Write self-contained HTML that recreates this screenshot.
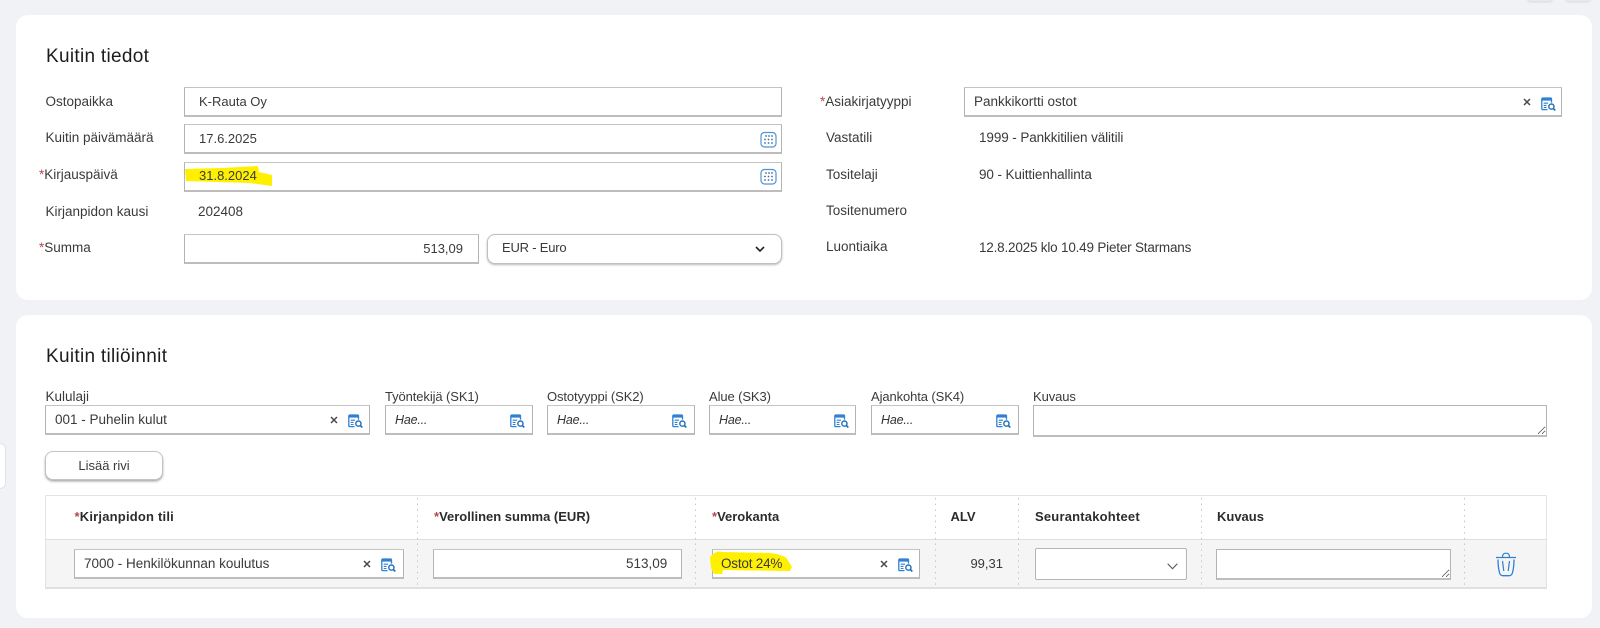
<!DOCTYPE html>
<html lang="fi">
<head>
<meta charset="utf-8">
<title>Kuitin tiedot</title>
<style>
html,body{margin:0;padding:0;background:#f0f2f6}
body{width:1600px;height:628px;position:relative;overflow:hidden;font-family:"Liberation Sans",sans-serif;font-size:13.5px;color:#3a3a3a;filter:blur(.3px)}
.a{position:absolute}
.card{position:absolute;background:#fff;border-radius:12px;left:16px;width:1576px}
.i{position:absolute;box-sizing:border-box;background:#fff;border:1px solid #b4b4b4;border-top-color:#c4c4c4;border-bottom:2px solid #bdbdbd}
.t{position:absolute;white-space:nowrap;line-height:20px;height:20px}
.h{font-size:19px;color:#1c1c1c;letter-spacing:.3px}
.b{font-weight:bold;color:#2c2c2c;font-size:13px}
.r{color:#b8454f}
.it{font-style:italic;color:#333;font-size:12.5px;letter-spacing:-.2px}
.s{font-size:13px}
.l{font-size:13px;letter-spacing:-.1px}
.dv{position:absolute;width:1px;background:linear-gradient(#c4c4c4 0 1.5px,transparent 1.5px) 0 0/1px 5.7px repeat-y}
textarea{position:absolute;box-sizing:border-box;margin:0;padding:0;background:#fff;border:1px solid #b4b4b4;border-bottom:2px solid #bdbdbd;border-radius:0;outline:none}
svg.o{position:absolute;overflow:visible}
</style>
</head>
<body>
<svg width="0" height="0" style="position:absolute">
<defs>
<symbol id="s" viewBox="0 0 15 14">
<path d="M10.5 5.6V2a1 1 0 0 0-1-1H1.8a1 1 0 0 0-1 1v9.6a1 1 0 0 0 1 1h4.7" fill="none" stroke="#2f80d2" stroke-width="1.3"/>
<path d="M1 1.2h9.4v2.4H1z" fill="#2f80d2"/>
<path d="M2.7 6.2h4.3M2.7 8.4h2.8M2.7 10.5h2.8" stroke="#2f80d2" stroke-width="1.1"/>
<circle cx="10.4" cy="9.6" r="2.6" fill="none" stroke="#1f6fc0" stroke-width="1.4"/>
<path d="M12.3 11.5l2 2" stroke="#1f6fc0" stroke-width="1.6"/>
</symbol>
<symbol id="x" viewBox="0 0 8 8">
<path d="M1 1l6 6M7 1L1 7" stroke="#4a4a4a" stroke-width="1.5"/>
</symbol>
<symbol id="c" viewBox="0 0 17 17">
<rect x="1" y="1.5" width="15" height="14.5" rx="3.5" fill="none" stroke="#4f93d8" stroke-width="1.2"/>
<g fill="#3f6f9f"><circle cx="6" cy="5" r=".9"/><circle cx="9" cy="5" r=".9"/><circle cx="12" cy="5" r=".9"/><circle cx="5" cy="8.5" r=".9"/><circle cx="8.5" cy="8.5" r=".9"/><circle cx="12" cy="8.5" r=".9"/><circle cx="5" cy="12" r=".9"/><circle cx="8.5" cy="12" r=".9"/><circle cx="12" cy="12" r=".9"/></g>
</symbol>
</defs>
</svg>

<div class="a" style="left:1527px;top:-7px;width:26px;height:8px;border-radius:4px;background:#e8ebee;box-shadow:0 1px 2px #d4dada"></div>
<div class="a" style="left:1565px;top:-7px;width:26px;height:8px;border-radius:4px;background:#e8ebee;box-shadow:0 1px 2px #d4dada"></div>
<div class="a" style="left:-10px;top:443px;width:14px;height:44px;background:#fff;border:1px solid #e2e3e6;border-radius:6px"></div>

<div class="card" style="top:15px;height:285px"></div>
<div class="card" style="top:315px;height:303px"></div>

<!-- Card 1 -->
<div class="t h" style="left:46px;top:46.5px">Kuitin tiedot</div>

<div class="t" style="left:45.5px;top:92px">Ostopaikka</div>
<div class="t" style="left:45.5px;top:128px">Kuitin päivämäärä</div>
<div class="t" style="left:39px;top:165px"><span class="r">*</span>Kirjauspäivä</div>
<div class="t" style="left:45.5px;top:202px">Kirjanpidon kausi</div>
<div class="t" style="left:39px;top:238px"><span class="r">*</span>Summa</div>

<div class="i" style="left:184px;top:87px;width:598px;height:30px"></div>
<div class="i" style="left:184px;top:124px;width:598px;height:30px"></div>
<div class="i" style="left:184px;top:162px;width:598px;height:30px"></div>
<div class="i" style="left:184px;top:234px;width:295px;height:30px"></div>
<div class="i" style="left:487px;top:234px;width:295px;height:30px;border:1px solid #c0c0c0;border-radius:8px;box-shadow:0 1px 2px #b8b8b8"></div>

<svg class="o" style="left:0;top:0" width="1600" height="628">
<path d="M185 169 L222 168 L258 166 L259 172 L272 175 L272 186 L250 183 L186 181 Z" fill="#fff000"/>
</svg>

<div class="t s" style="left:199px;top:92px">K-Rauta Oy</div>
<div class="t s" style="left:199px;top:129px">17.6.2025</div>
<div class="t s" style="left:199px;top:166px">31.8.2024</div>
<div class="t" style="left:198px;top:202px">202408</div>
<div class="t s" style="left:423px;top:239px;width:40px;text-align:right">513,09</div>
<div class="t s" style="left:502px;top:238px;letter-spacing:-.2px">EUR - Euro</div>
<svg class="o" style="left:755px;top:246px" width="10" height="7"><path d="M1 1l4 4 4-4" fill="none" stroke="#222" stroke-width="1.6"/></svg>
<svg class="o" style="left:760px;top:131px" width="17" height="17"><use href="#c"/></svg>
<svg class="o" style="left:760px;top:168px" width="17" height="17"><use href="#c"/></svg>

<div class="t" style="left:820px;top:92px"><span class="r">*</span>Asiakirjatyyppi</div>
<div class="t" style="left:826px;top:128px">Vastatili</div>
<div class="t" style="left:826px;top:165px">Tositelaji</div>
<div class="t" style="left:826px;top:201px">Tositenumero</div>
<div class="t" style="left:826px;top:237px">Luontiaika</div>

<div class="i" style="left:964px;top:87px;width:598px;height:30px"></div>
<div class="t" style="left:974px;top:92px">Pankkikortti ostot</div>
<svg class="o" style="left:1522.5px;top:98px" width="8" height="8"><use href="#x"/></svg>
<svg class="o" style="left:1541px;top:96.5px" width="15" height="14"><use href="#s"/></svg>
<div class="t" style="left:979px;top:128px;letter-spacing:-.1px">1999 - Pankkitilien välitili</div>
<div class="t" style="left:979px;top:165px;letter-spacing:-.1px">90 - Kuittienhallinta</div>
<div class="t" style="left:979px;top:238px;letter-spacing:-.2px">12.8.2025 klo 10.49 Pieter Starmans</div>

<!-- Card 2 -->
<div class="t h" style="left:46px;top:346.5px">Kuitin tiliöinnit</div>

<div class="t" style="left:45.5px;top:387px">Kululaji</div>
<div class="t l" style="left:385px;top:387px">Työntekijä (SK1)</div>
<div class="t l" style="left:547px;top:387px">Ostotyyppi (SK2)</div>
<div class="t l" style="left:709px;top:387px">Alue (SK3)</div>
<div class="t l" style="left:871px;top:387px">Ajankohta (SK4)</div>
<div class="t l" style="left:1033px;top:387px">Kuvaus</div>

<div class="i" style="left:45px;top:405px;width:325px;height:30px"></div>
<div class="i" style="left:385px;top:405px;width:148px;height:30px"></div>
<div class="i" style="left:547px;top:405px;width:148px;height:30px"></div>
<div class="i" style="left:709px;top:405px;width:147px;height:30px"></div>
<div class="i" style="left:871px;top:405px;width:148px;height:30px"></div>
<textarea style="left:1033px;top:405px;width:514px;height:32px"></textarea>

<div class="t" style="left:55px;top:410px">001 - Puhelin kulut</div>
<svg class="o" style="left:330px;top:416px" width="8" height="8"><use href="#x"/></svg>
<svg class="o" style="left:348px;top:413.5px" width="15" height="14"><use href="#s"/></svg>
<div class="t it" style="left:395px;top:410px">Hae...</div>
<svg class="o" style="left:510px;top:413.5px" width="15" height="14"><use href="#s"/></svg>
<div class="t it" style="left:557px;top:410px">Hae...</div>
<svg class="o" style="left:672px;top:413.5px" width="15" height="14"><use href="#s"/></svg>
<div class="t it" style="left:719px;top:410px">Hae...</div>
<svg class="o" style="left:834px;top:413.5px" width="15" height="14"><use href="#s"/></svg>
<div class="t it" style="left:881px;top:410px">Hae...</div>
<svg class="o" style="left:996px;top:413.5px" width="15" height="14"><use href="#s"/></svg>

<div class="a" style="left:45px;top:451px;width:118px;height:29px;box-sizing:border-box;background:#fff;border:1px solid #c4c4c4;border-radius:8px;box-shadow:0 1.5px 2px #aaa;text-align:center;line-height:27px;font-size:13px">Lisää rivi</div>

<div class="a" style="left:45px;top:495px;width:1502px;height:94px;box-sizing:border-box;border:1px solid #e3e3e3;border-bottom:2px solid #e0e0e0;background:#fff"></div>
<div class="a" style="left:46px;top:539px;width:1500px;height:48px;background:#f5f5f5;border-top:1px solid #dedede;box-sizing:border-box"></div>

<div class="dv" style="left:417px;top:498px;height:88px"></div>
<div class="dv" style="left:695px;top:498px;height:88px"></div>
<div class="dv" style="left:935px;top:498px;height:88px"></div>
<div class="dv" style="left:1018px;top:498px;height:88px"></div>
<div class="dv" style="left:1201px;top:498px;height:88px"></div>
<div class="dv" style="left:1464px;top:498px;height:88px"></div>

<div class="t b" style="left:74.5px;top:507px;letter-spacing:.2px"><span class="r">*</span>Kirjanpidon tili</div>
<div class="t b" style="left:434px;top:507px"><span class="r">*</span>Verollinen summa (EUR)</div>
<div class="t b" style="left:712px;top:507px"><span class="r">*</span>Verokanta</div>
<div class="t b" style="left:950.5px;top:507px">ALV</div>
<div class="t b" style="left:1035px;top:507px;letter-spacing:.2px">Seurantakohteet</div>
<div class="t b" style="left:1217px;top:507px">Kuvaus</div>

<div class="i" style="left:74px;top:549px;width:330px;height:30px"></div>
<div class="i" style="left:433px;top:549px;width:249px;height:30px"></div>
<div class="i" style="left:712px;top:549px;width:208px;height:30px"></div>
<div class="i" style="left:1035px;top:548px;width:152px;height:32px;border:1px solid #b4b4b4;border-radius:2px"></div>
<textarea style="left:1216px;top:549px;width:235px;height:31px"></textarea>

<div class="t" style="left:84px;top:554px">7000 - Henkilökunnan koulutus</div>
<svg class="o" style="left:363px;top:560px" width="8" height="8"><use href="#x"/></svg>
<svg class="o" style="left:381px;top:558px" width="15" height="14"><use href="#s"/></svg>
<div class="t" style="left:626px;top:554px;width:40px;text-align:right">513,09</div>
<svg class="o" style="left:710px;top:551px" width="84" height="24"><path d="M0 6 Q 6 -1 12 1 L60 2 Q 75 4 77 8 L82 16 L80 20 L13 19 L12 23 L4 23 L1 17 Z" fill="#fff000"/></svg>
<div class="t" style="left:721px;top:554px;letter-spacing:-.2px">Ostot 24%</div>
<svg class="o" style="left:880px;top:560px" width="8" height="8"><use href="#x"/></svg>
<svg class="o" style="left:898px;top:558px" width="15" height="14"><use href="#s"/></svg>
<div class="t s" style="left:960px;top:554px;width:43px;text-align:right">99,31</div>
<svg class="o" style="left:1167px;top:563px" width="11" height="7"><path d="M.7.7l4.8 5 4.8-5" fill="none" stroke="#555" stroke-width="1.1"/></svg>
<svg class="o" style="left:1495px;top:552px" width="22" height="25" viewBox="0 0 22 25">
<path d="M1 5.5h20M7.5 5c0-2.6 1.4-3.8 3.5-3.8S14.5 2.4 14.5 5" fill="none" stroke="#2f80d2" stroke-width="1.2"/>
<path d="M3 7.5c0 6 .6 10 1.6 13.5.5 1.700 2 2.700 3.500 2.700h5.800c1.500 0 3-1 3.500-2.700 1-3.500 1.600-7.500 1.600-13.500" fill="none" stroke="#2f80d2" stroke-width="1.3"/>
<path d="M7.5 9l1.3 10M14.5 9l-1.3 10" fill="none" stroke="#2f80d2" stroke-width="1.2"/>
</svg>
</body>
</html>
